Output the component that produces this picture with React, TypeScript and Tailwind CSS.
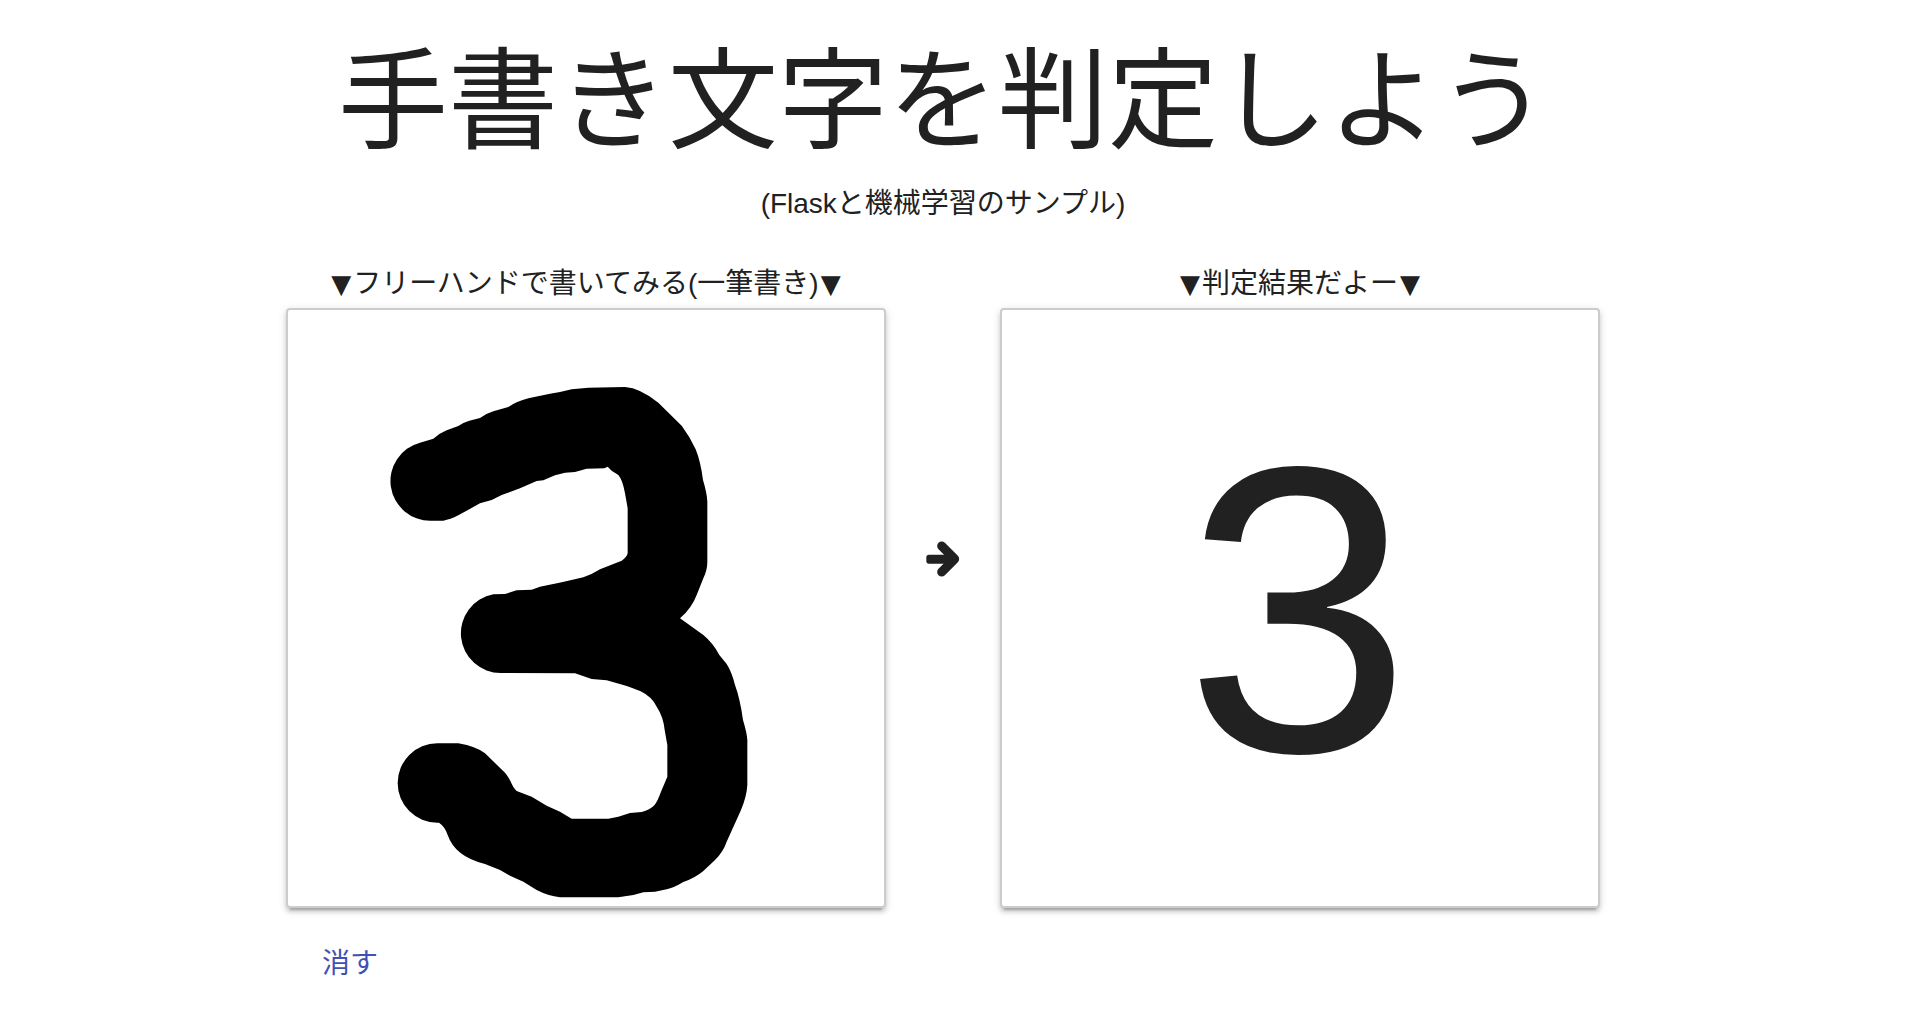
import { useState, type ReactNode } from "react";

function HandwrittenDigit() {
  return (
    <svg viewBox="0 0 1788 1788" className="block size-full" role="img" aria-label="手書きの3">
      <path
        transform="translate(246 150)"
        fill="#000"
        d="M184 482A119 119 0 0 1 150 248L190 236Q208 220 230 211L265 198Q280 187 298 182L330 174Q350 160 370 154L415 141Q440 124 475 115L540 101L570 96L605 88L655 83L765 81Q810 84 865 128L935 197Q960 230 977 268Q992 305 999 360Q1011 400 1012 425V605Q1012 630 1000 655L980 705Q965 745 930 775L1000 825Q1030 850 1048 885L1070 912Q1085 935 1095 975Q1110 1015 1119 1080Q1131 1120 1132 1140V1275Q1130 1310 1113 1350L1070 1445Q1060 1475 1035 1500L1000 1533Q975 1554 940 1566Q910 1584 890 1588L855 1595L820 1597L790 1605L745 1612H570Q535 1608 500 1590L460 1565L420 1547L390 1530L345 1512Q255 1490 233 1425Q225 1400 207 1388L202 1388A119 119 0 0 1 202 1150H265Q320 1160 345 1180L405 1238C425 1262 425 1280 440 1293L485 1310L530 1337L570 1355L605 1376H715L745 1370L780 1359L815 1356Q840 1350 853 1336Q862 1325 873 1295L892 1250V1155L884 1110Q880 1070 860 1040Q845 1010 812 994Q790 985 770 978L710 961L665 957L615 940L393 939A119 119 0 0 1 370 703L405 702L440 691L485 689L510 680L575 667L640 652Q665 644 690 628L755 602Q773 588 773 578V445L765 400Q758 360 745 345L725 332L713 320L703 325L650 326L615 336L585 338L555 346L520 361L500 363L450 385L395 405L365 420L330 430L265 466Q240 479 220 482Z"
      />
    </svg>
  );
}

function ArrowIcon() {
  return (
    <svg viewBox="0 0 102 108" className="h-9 w-[34px]" aria-hidden="true">
      <rect x="1" y="41" width="84" height="27" rx="8" fill="#212121" />
      <path d="M47 15L86 54L47 93" fill="none" stroke="#212121" strokeWidth="27" strokeLinecap="round" strokeLinejoin="round" />
    </svg>
  );
}

function Triangle() {
  return <span className="px-0.5 text-[26px] font-['DejaVu_Sans',sans-serif]">▼</span>;
}

function Panel({ label, children }: { label: string; children?: ReactNode }) {
  return (
    <section className="flex w-[600px] min-w-0 flex-col">
      <h2 className="h-12 text-center text-[28px] leading-[48px] whitespace-nowrap">
        <Triangle />
        {label}
        <Triangle />
      </h2>
      <div className="flex aspect-square w-full items-center justify-center overflow-hidden rounded border-2 border-[#cccccc] bg-white shadow-[0_4px_4px_rgba(0,0,0,0.14),0_6px_2px_-4px_rgba(0,0,0,0.2),0_2px_10px_rgba(0,0,0,0.12)]">
        {children}
      </div>
    </section>
  );
}

export default function App() {
  const [drawn, setDrawn] = useState(true);

  return (
    <main
      lang="ja"
      className="flex min-h-screen flex-col items-center bg-white pr-11 text-[#212121] font-['Liberation_Sans','Noto_Sans_CJK_JP',sans-serif]"
    >
      <h1 className="mt-8 text-center text-[110px] leading-[140px] whitespace-nowrap">手書き文字を判定しよう</h1>
      <p className="mt-2 text-center text-[28px] leading-[48px]">(Flaskと機械学習のサンプル)</p>

      <div className="mt-8 flex max-w-full flex-col">
        <div className="flex">
          <Panel label="フリーハンドで書いてみる(一筆書き)">{drawn && <HandwrittenDigit />}</Panel>
          <div className="flex w-[114px] shrink-0 items-center justify-center pb-[50px]">
            <ArrowIcon />
          </div>
          <Panel label="判定結果だよー">
            {drawn && <output className="pt-1 pr-1 text-[408px] leading-none">3</output>}
          </Panel>
        </div>
        <button
          type="button"
          onClick={() => setDrawn(false)}
          className="mt-5 h-[72px] min-w-32 cursor-pointer self-start px-8 text-[28px] leading-[72px] text-[#3f51b5]"
        >
          消す
        </button>
      </div>
    </main>
  );
}
